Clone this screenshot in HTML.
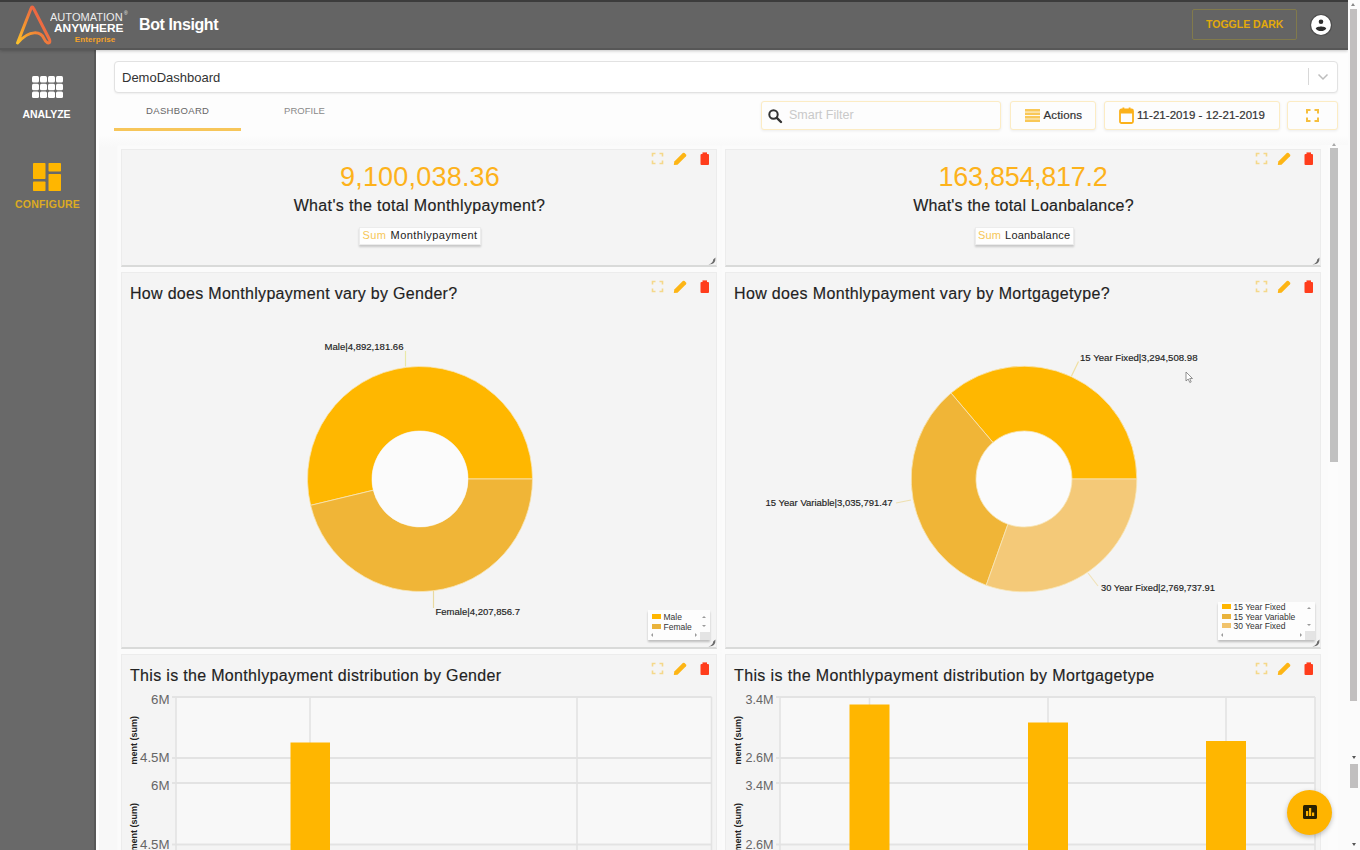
<!DOCTYPE html>
<html><head><meta charset="utf-8"><title>Bot Insight</title>
<style>
*{box-sizing:border-box;margin:0;padding:0}
html,body{width:1360px;height:850px;overflow:hidden;background:#fbfbfb;font-family:"Liberation Sans",sans-serif;}
.abs{position:absolute}
#hdr{position:absolute;left:0;top:0;width:1348px;height:50px;background:#646464;border-bottom:2.500px solid #575757;box-shadow:0 1px 3px rgba(0,0,0,.22)}
#side{position:absolute;left:0;top:49px;width:95.500px;height:801px;background:#696969;border-right:2.500px solid #595959}
#pscroll{position:absolute;left:1348px;top:0;width:12px;height:850px;background:#fbfbfb}
.t{position:absolute;white-space:nowrap;line-height:1}
.card{position:absolute;background:#f4f4f4;border:1px solid #ececec;border-bottom:2px solid #d9dad9;box-shadow:0 0 0 3.500px #fbfbfb}
.btn{position:absolute;background:#fdfdfd;border:1px solid #fcecc4;border-radius:3px;box-shadow:0 1px 3px rgba(0,0,0,.07)}
.kv{font-size:27px;color:#fdb21b;text-align:center;letter-spacing:.35px}
.kq{font-size:16px;color:#222;text-align:center;letter-spacing:.3px;-webkit-text-stroke:.15px #222}
.ct{font-size:16px;color:#222;letter-spacing:.3px;-webkit-text-stroke:.15px #222}
.tag{position:absolute;height:17.5px;background:#fefefe;border:1px solid #ececec;box-shadow:0 1.5px 2px rgba(0,0,0,.18);font-size:11px;color:#222;text-align:left;padding-left:3px;line-height:15.5px;white-space:nowrap;word-spacing:.6px;letter-spacing:.45px}
.tag span{color:#f6c757}
.lg{position:absolute;background:#fdfdfd;box-shadow:0 1.500px 2px rgba(0,0,0,.22)}
.lg i{position:absolute;width:8.500px;height:5px}
.lg b{position:absolute;font-weight:normal;font-size:8.500px;line-height:1;color:#333;white-space:nowrap}
.lg u{position:absolute;width:0;height:0;border:2px solid transparent;border-bottom:2.500px solid #9a9a9a;border-top:0;text-decoration:none}
.lg u.d{border-bottom:0;border-top:2.500px solid #9a9a9a}
.lg u.l{border:2px solid transparent;border-right:2.500px solid #9a9a9a;border-left:0}
.lg u.r{border:2px solid transparent;border-left:2.500px solid #9a9a9a;border-right:0}
.lg s{position:absolute;width:10px;height:8.500px;background:#e4e4e4}
.rh{position:absolute;width:6px;height:6px;border-right:2.500px solid #555;border-bottom:2.500px solid #555;border-bottom-right-radius:5px}
</style></head><body>
<div id="main" class="abs" style="left:95px;top:49px;width:1253px;height:801px;background:linear-gradient(#fdfdfd 0,#fdfdfd 86px,#f8f8f8 98px)">
<!-- coords relative to main: subtract 95,49 -->
<div class="abs" style="left:19px;top:12px;width:1224px;height:32px;background:#fff;border:1px solid #e2e2e2;border-radius:4px;box-shadow:0 1px 2px rgba(0,0,0,.06)"></div>
<div class="t" style="left:27px;top:22px;font-size:13px;color:#333">DemoDashboard</div>
<div class="abs" style="left:1213px;top:19px;width:1px;height:17px;background:#d8d8d8"></div>
<svg class="abs" style="left:1222px;top:24px" width="12" height="8" viewBox="0 0 12 8"><path d="M1.500 1.500 L6 6 L10.500 1.500" fill="none" stroke="#bdbdbd" stroke-width="1.500"/></svg>
<div class="t" style="left:51px;top:57px;font-size:9.5px;color:#666;letter-spacing:.35px">DASHBOARD</div>
<div class="t" style="left:189px;top:57px;font-size:9.5px;color:#8a8a8a;letter-spacing:.05px">PROFILE</div>
<div class="abs" style="left:19px;top:79px;width:127px;height:3px;background:#f7c65a"></div>
<div class="btn" style="left:666px;top:52px;width:240px;height:29px"></div>
<svg class="abs" style="left:672px;top:59px" width="16" height="16" viewBox="0 0 16 16"><circle cx="6.500" cy="6.500" r="4.200" fill="none" stroke="#333" stroke-width="2"/><path d="M9.800 9.800 L14 14" stroke="#333" stroke-width="2.400" stroke-linecap="round"/></svg>
<div class="t" style="left:694px;top:60px;font-size:12.5px;color:#c9c9c9">Smart Filter</div>
<div class="btn" style="left:915px;top:52px;width:86px;height:29px"></div>
<svg class="abs" style="left:930px;top:60px" width="15" height="13" viewBox="0 0 15 13"><g fill="#f9c857"><rect x="0" y="0" width="15" height="2.600"/><rect x="0" y="3.500" width="15" height="2.600"/><rect x="0" y="7" width="15" height="2.600"/><rect x="0" y="10.400" width="15" height="2.600"/></g></svg>
<div class="t" style="left:948.5px;top:61px;font-size:11.5px;color:#333;letter-spacing:.13px;-webkit-text-stroke:.2px #333">Actions</div>
<div class="btn" style="left:1009px;top:52px;width:176px;height:29px"></div>
<svg class="abs" style="left:1024px;top:58px" width="15" height="17" viewBox="0 0 15 17"><rect x="1" y="2.500" width="13" height="13.500" rx="1.500" fill="none" stroke="#fbb11a" stroke-width="1.800"/><rect x="1" y="2.500" width="13" height="4" fill="#fbb11a"/><rect x="3.500" y="0.500" width="1.800" height="3" fill="#fbb11a"/><rect x="9.700" y="0.500" width="1.800" height="3" fill="#fbb11a"/></svg>
<div class="t" style="left:1042px;top:61px;font-size:11.5px;color:#333;letter-spacing:.04px;-webkit-text-stroke:.2px #333">11-21-2019 - 12-21-2019</div>
<div class="btn" style="left:1192px;top:52px;width:51px;height:29px"></div>
<svg class="abs" style="left:1211px;top:60px" width="13" height="13" viewBox="0 0 13 13"><path d="M1 4.500V1H4.500 M8.500 1H12V4.500 M12 8.500V12H8.500 M4.500 12H1V8.500" fill="none" stroke="#f6bf3e" stroke-width="2"/></svg>

<div class="abs" style="left:0;top:0;width:4px;height:801px;background:#fff"></div>
<div class="abs" style="left:1226px;top:96px;width:27px;height:705px;background:#fbfbfb"></div>
<!-- cards -->
<div class="card" style="left:26px;top:100px;width:596px;height:118px"></div>
<div class="card" style="left:630px;top:100px;width:596px;height:118px"></div>
<div class="card" style="left:26px;top:223px;width:596px;height:377px"></div>
<div class="card" style="left:630px;top:223px;width:596px;height:377px"></div>
<div class="card" style="left:26px;top:605px;width:596px;height:230px"></div>
<div class="card" style="left:630px;top:605px;width:596px;height:230px"></div>
<svg class="abs" style="left:556px;top:103px" width="62" height="14" viewBox="0 0 62 14"><path d="M1.500 4.500V1.500H4.500 M8.500 1.500H11.500V4.500 M11.500 8.500V11.500H8.500 M4.500 11.500H1.500V8.500" fill="none" stroke="#f4d88a" stroke-width="1.600"/><path d="M22.800 13 L23.300 9.600 L31.800 1.100 Q32.700 .3 33.600 1.100 L35 2.500 Q35.800 3.400 35 4.300 L26.500 12.800 Z" fill="#fdb515"/><rect x="49.500" y="2" width="8.500" height="11" rx="1" fill="#ff3d1c"/><rect x="51.500" y=".4" width="4.500" height="2" fill="#ff3d1c"/></svg><svg class="abs" style="left:1160px;top:103px" width="62" height="14" viewBox="0 0 62 14"><path d="M1.500 4.500V1.500H4.500 M8.500 1.500H11.500V4.500 M11.500 8.500V11.500H8.500 M4.500 11.500H1.500V8.500" fill="none" stroke="#f4d88a" stroke-width="1.600"/><path d="M22.800 13 L23.300 9.600 L31.800 1.100 Q32.700 .3 33.600 1.100 L35 2.500 Q35.800 3.400 35 4.300 L26.500 12.800 Z" fill="#fdb515"/><rect x="49.500" y="2" width="8.500" height="11" rx="1" fill="#ff3d1c"/><rect x="51.500" y=".4" width="4.500" height="2" fill="#ff3d1c"/></svg><svg class="abs" style="left:556px;top:231px" width="62" height="14" viewBox="0 0 62 14"><path d="M1.500 4.500V1.500H4.500 M8.500 1.500H11.500V4.500 M11.500 8.500V11.500H8.500 M4.500 11.500H1.500V8.500" fill="none" stroke="#f4d88a" stroke-width="1.600"/><path d="M22.800 13 L23.300 9.600 L31.800 1.100 Q32.700 .3 33.600 1.100 L35 2.500 Q35.800 3.400 35 4.300 L26.500 12.800 Z" fill="#fdb515"/><rect x="49.500" y="2" width="8.500" height="11" rx="1" fill="#ff3d1c"/><rect x="51.500" y=".4" width="4.500" height="2" fill="#ff3d1c"/></svg><svg class="abs" style="left:1160px;top:231px" width="62" height="14" viewBox="0 0 62 14"><path d="M1.500 4.500V1.500H4.500 M8.500 1.500H11.500V4.500 M11.500 8.500V11.500H8.500 M4.500 11.500H1.500V8.500" fill="none" stroke="#f4d88a" stroke-width="1.600"/><path d="M22.800 13 L23.300 9.600 L31.800 1.100 Q32.700 .3 33.600 1.100 L35 2.500 Q35.800 3.400 35 4.300 L26.500 12.800 Z" fill="#fdb515"/><rect x="49.500" y="2" width="8.500" height="11" rx="1" fill="#ff3d1c"/><rect x="51.500" y=".4" width="4.500" height="2" fill="#ff3d1c"/></svg><svg class="abs" style="left:556px;top:613px" width="62" height="14" viewBox="0 0 62 14"><path d="M1.500 4.500V1.500H4.500 M8.500 1.500H11.500V4.500 M11.500 8.500V11.500H8.500 M4.500 11.500H1.500V8.500" fill="none" stroke="#f4d88a" stroke-width="1.600"/><path d="M22.800 13 L23.300 9.600 L31.800 1.100 Q32.700 .3 33.600 1.100 L35 2.500 Q35.800 3.400 35 4.300 L26.500 12.800 Z" fill="#fdb515"/><rect x="49.500" y="2" width="8.500" height="11" rx="1" fill="#ff3d1c"/><rect x="51.500" y=".4" width="4.500" height="2" fill="#ff3d1c"/></svg><svg class="abs" style="left:1160px;top:613px" width="62" height="14" viewBox="0 0 62 14"><path d="M1.500 4.500V1.500H4.500 M8.500 1.500H11.500V4.500 M11.500 8.500V11.500H8.500 M4.500 11.500H1.500V8.500" fill="none" stroke="#f4d88a" stroke-width="1.600"/><path d="M22.800 13 L23.300 9.600 L31.800 1.100 Q32.700 .3 33.600 1.100 L35 2.500 Q35.800 3.400 35 4.300 L26.500 12.800 Z" fill="#fdb515"/><rect x="49.500" y="2" width="8.500" height="11" rx="1" fill="#ff3d1c"/><rect x="51.500" y=".4" width="4.500" height="2" fill="#ff3d1c"/></svg>
<svg class="abs" style="left:0;top:0" width="1253" height="801" viewBox="95 49 1253 801" font-family="Liberation Sans, sans-serif">
<path d="M532.50 479.00A112.5 112.5 0 1 0 310.62 505.33L373.33 490.23A48 48 0 1 1 468.00 479.00Z" fill="#ffb700" stroke="#f8e6b8" stroke-width=".8"/>
<path d="M310.62 505.33A112.5 112.5 0 0 0 532.50 479.00L468.00 479.00A48 48 0 0 1 373.33 490.23Z" fill="#f0b537" stroke="#f8e6b8" stroke-width=".8"/>
<circle cx="420" cy="479" r="48" fill="#fbfbfb"/><circle cx="1024" cy="479" r="48" fill="#fbfbfb"/><path d="M405.500 351V366.500" stroke="#e9e8a8" stroke-width="1.200" fill="none"/>
<path d="M433.500 591V608" stroke="#e9d9a0" stroke-width="1.200" fill="none"/>
<text x="324.500" y="349.700" font-size="8.500" fill="#222" stroke="#222" stroke-width=".15" textLength="79" lengthAdjust="spacingAndGlyphs">Male|4,892,181.66</text>
<text x="435.500" y="615" font-size="8.500" fill="#222" stroke="#222" stroke-width=".15" textLength="84.500" lengthAdjust="spacingAndGlyphs">Female|4,207,856.7</text>
<path d="M1136.80 479.00A112.8 112.8 0 0 0 950.99 393.01L992.93 442.41A48 48 0 0 1 1072.00 479.00Z" fill="#ffb700" stroke="#f8e6b8" stroke-width=".8"/>
<path d="M950.99 393.01A112.8 112.8 0 0 0 986.21 585.28L1007.92 524.23A48 48 0 0 1 992.93 442.41Z" fill="#f0b537" stroke="#f8e6b8" stroke-width=".8"/>
<path d="M986.21 585.28A112.8 112.8 0 0 0 1136.80 479.00L1072.00 479.00A48 48 0 0 1 1007.92 524.23Z" fill="#f4c978" stroke="#f8e6b8" stroke-width=".8"/>
<path d="M1071.500 376L1078.500 361.500" stroke="#f0dfa0" stroke-width="1.200" fill="none"/>
<path d="M896 503L911 500" stroke="#eee0b0" stroke-width="1.200" fill="none"/>
<path d="M1088 573L1098 586" stroke="#f0e2b8" stroke-width="1.200" fill="none"/>
<text x="1080" y="360.500" font-size="8.500" fill="#222" stroke="#222" stroke-width=".15" textLength="117.500" lengthAdjust="spacingAndGlyphs">15 Year Fixed|3,294,508.98</text>
<text x="765.500" y="506" font-size="8.500" fill="#222" stroke="#222" stroke-width=".15" textLength="127" lengthAdjust="spacingAndGlyphs">15 Year Variable|3,035,791.47</text>
<text x="1101" y="591" font-size="8.500" fill="#222" stroke="#222" stroke-width=".15" textLength="114" lengthAdjust="spacingAndGlyphs">30 Year Fixed|2,769,737.91</text>
<rect x="176" y="697" width="535.5" height="61" fill="#f8f8f8"/>
<rect x="176" y="783" width="535.5" height="61.5" fill="#f8f8f8"/>
<rect x="176" y="758" width="535.5" height="25" fill="#f7f7f7"/>
<path d="M172 697H711.5" stroke="#e3e3e3" stroke-width="2"/>
<path d="M172 758H711.5" stroke="#e3e3e3" stroke-width="2"/>
<path d="M172 783H711.5" stroke="#e3e3e3" stroke-width="2"/>
<path d="M172 844.5H711.5" stroke="#e3e3e3" stroke-width="2"/>
<path d="M310 697V850" stroke="#e3e3e3" stroke-width="1.600"/>
<path d="M577 697V850" stroke="#e3e3e3" stroke-width="1.600"/>
<path d="M176 697V850" stroke="#e3e3e3" stroke-width="1.600"/>
<path d="M711.5 697V850" stroke="#e3e3e3" stroke-width="1.600"/>
<text x="169.5" y="704.2" font-size="12" fill="#666" text-anchor="end" textLength="18.5" lengthAdjust="spacingAndGlyphs">6M</text>
<text x="169.5" y="762.2" font-size="12" fill="#666" text-anchor="end" textLength="29.5" lengthAdjust="spacingAndGlyphs">4.5M</text>
<text x="169.5" y="790.2" font-size="12" fill="#666" text-anchor="end" textLength="18.5" lengthAdjust="spacingAndGlyphs">6M</text>
<text x="169.5" y="848.7" font-size="12" fill="#666" text-anchor="end" textLength="29.5" lengthAdjust="spacingAndGlyphs">4.5M</text>
<text transform="translate(136.5 764.5) rotate(-90)" font-size="9" font-weight="bold" fill="#222">ment (sum)</text>
<text transform="translate(136.5 851.5) rotate(-90)" font-size="9" font-weight="bold" fill="#222">ment (sum)</text>
<rect x="290.500" y="742.500" width="39.500" height="110" fill="#ffb600"/>
<rect x="780" y="697" width="535" height="61" fill="#f8f8f8"/>
<rect x="780" y="783" width="535" height="61.5" fill="#f8f8f8"/>
<rect x="780" y="758" width="535" height="25" fill="#f7f7f7"/>
<path d="M776 697H1315" stroke="#e3e3e3" stroke-width="2"/>
<path d="M776 758H1315" stroke="#e3e3e3" stroke-width="2"/>
<path d="M776 783H1315" stroke="#e3e3e3" stroke-width="2"/>
<path d="M776 844.5H1315" stroke="#e3e3e3" stroke-width="2"/>
<path d="M869.5 697V850" stroke="#e3e3e3" stroke-width="1.600"/>
<path d="M1048 697V850" stroke="#e3e3e3" stroke-width="1.600"/>
<path d="M1226 697V850" stroke="#e3e3e3" stroke-width="1.600"/>
<path d="M780 697V850" stroke="#e3e3e3" stroke-width="1.600"/>
<path d="M1315 697V850" stroke="#e3e3e3" stroke-width="1.600"/>
<text x="773.5" y="704.2" font-size="12" fill="#666" text-anchor="end" textLength="28" lengthAdjust="spacingAndGlyphs">3.4M</text>
<text x="773.5" y="762.2" font-size="12" fill="#666" text-anchor="end" textLength="28" lengthAdjust="spacingAndGlyphs">2.6M</text>
<text x="773.5" y="790.2" font-size="12" fill="#666" text-anchor="end" textLength="28" lengthAdjust="spacingAndGlyphs">3.4M</text>
<text x="773.5" y="848.7" font-size="12" fill="#666" text-anchor="end" textLength="28" lengthAdjust="spacingAndGlyphs">2.6M</text>
<text transform="translate(740.5 764.5) rotate(-90)" font-size="9" font-weight="bold" fill="#222">ment (sum)</text>
<text transform="translate(740.5 851.5) rotate(-90)" font-size="9" font-weight="bold" fill="#222">ment (sum)</text>
<rect x="849.5" y="704.5" width="40" height="150" fill="#ffb600"/>
<rect x="1028" y="722.5" width="40" height="150" fill="#ffb600"/>
<rect x="1206" y="741" width="40" height="150" fill="#ffb600"/>
</svg>
<div class="t kv" style="left:27px;width:596px;top:115px;letter-spacing:.2px">9,100,038.36</div>
<div class="t kq" style="left:26.500px;width:596px;top:149px;letter-spacing:.35px">What's the total Monthlypayment?</div>
<div class="tag" style="left:263.500px;top:178px;width:122.500px"><span>Sum</span> Monthlypayment</div>
<div class="t kv" style="left:630px;width:596px;top:115px;letter-spacing:-.3px">163,854,817.2</div>
<div class="t kq" style="left:630.500px;width:596px;top:149px;letter-spacing:.2px">What's the total Loanbalance?</div>
<div class="tag" style="left:879.500px;top:178px;width:99px;letter-spacing:.2px;padding-left:2.500px"><span>Sum</span> Loanbalance</div>
<div class="t ct" style="left:35px;top:236.500px">How does Monthlypayment vary by Gender?</div>
<div class="t ct" style="left:639px;top:236.500px;letter-spacing:.35px">How does Monthlypayment vary by Mortgagetype?</div>
<div class="t ct" style="left:35px;top:618.500px;letter-spacing:.32px">This is the Monthlypayment distribution by Gender</div>
<div class="t ct" style="left:639px;top:618.500px;letter-spacing:.37px">This is the Monthlypayment distribution by Mortgagetype</div>
<div class="lg" style="left:553px;top:561px;width:61.5px;height:30px"><i style="left:4px;top:4.0px;background:#ffb600"></i><b style="left:15.500px;top:3.0px">Male</b><i style="left:4px;top:13.5px;background:#e9b33c"></i><b style="left:15.500px;top:12.5px">Female</b><u style="right:3.500px;top:5.500px"></u><u class="d" style="right:3.500px;top:15px"></u><u class="l" style="left:3px;bottom:3px"></u><u class="r" style="right:13px;bottom:3px"></u><s style="right:0;bottom:0"></s></div>
<div class="lg" style="left:1123px;top:552.5px;width:96.5px;height:38.0px"><i style="left:4px;top:2.8px;background:#ffb600"></i><b style="left:15.500px;top:1.8px">15 Year Fixed</b><i style="left:4px;top:12.3px;background:#e9b33c"></i><b style="left:15.500px;top:11.3px">15 Year Variable</b><i style="left:4px;top:21.8px;background:#f1c36c"></i><b style="left:15.500px;top:20.8px">30 Year Fixed</b><u style="right:3.500px;top:5px"></u><u class="d" style="right:3.500px;top:22.0px"></u><u class="l" style="left:3px;bottom:3px"></u><u class="r" style="right:13px;bottom:3px"></u><s style="right:0;bottom:0"></s></div>
<svg class="abs" style="left:613.0px;top:207.5px" width="8" height="8" viewBox="0 0 8 8"><path d="M7.500 .5Q7.800 7.800 .5 7.500Q5 6 5.200 2.500Z" fill="#6d6d6d"/></svg>
<svg class="abs" style="left:1217.0px;top:207.5px" width="8" height="8" viewBox="0 0 8 8"><path d="M7.500 .5Q7.800 7.800 .5 7.500Q5 6 5.200 2.500Z" fill="#6d6d6d"/></svg>
<svg class="abs" style="left:613.0px;top:589.5px" width="8" height="8" viewBox="0 0 8 8"><path d="M7.500 .5Q7.800 7.800 .5 7.500Q5 6 5.200 2.500Z" fill="#6d6d6d"/></svg>
<svg class="abs" style="left:1217.0px;top:589.5px" width="8" height="8" viewBox="0 0 8 8"><path d="M7.500 .5Q7.800 7.800 .5 7.500Q5 6 5.200 2.500Z" fill="#6d6d6d"/></svg>
<div class="abs" style="left:1233px;top:96px;width:10px;height:705px;background:#fcfcfc"></div>
<div class="abs" style="left:1235px;top:98.500px;width:8px;height:314.500px;background:#c1c1c1"></div>
<div class="abs" style="left:1237px;top:94px;width:0;height:0;border:2.500px solid transparent;border-bottom:3px solid #a8a8a8;border-top:0"></div>
<div class="abs" style="left:1192px;top:740.500px;width:45px;height:45px;border-radius:50%;background:#ffb400;box-shadow:0 2px 5px rgba(0,0,0,.25)"></div>
<svg class="abs" style="left:1207.500px;top:756px" width="14" height="14" viewBox="0 0 14 14"><rect width="14" height="14" rx="1.500" fill="#2b2200"/><rect x="3" y="6" width="2.200" height="5" fill="#ffb400"/><rect x="6" y="3" width="2.200" height="8" fill="#ffb400"/><rect x="9" y="7.500" width="2.200" height="3.500" fill="#ffb400"/></svg>
<svg class="abs" style="left:1090px;top:322px" width="9" height="13" viewBox="0 0 9 13"><path d="M1 1V10L3.200 8L4.800 11.500L6.200 10.900L4.700 7.500H7.500Z" fill="#fff" stroke="#777" stroke-width=".8"/></svg>
</div>
<div id="side">
<svg class="abs" style="left:32px;top:26.500px" width="31" height="22" viewBox="0 0 31 22"><g fill="#fff">
<rect x="0" y="0" width="7" height="6.500" rx="1.500"/><rect x="8" y="0" width="7" height="6.500" rx="1.500"/><rect x="16" y="0" width="7" height="6.500" rx="1.500"/><rect x="24" y="0" width="7" height="6.500" rx="1.500"/>
<rect x="0" y="7.700" width="7" height="6.500" rx="1.500"/><rect x="8" y="7.700" width="7" height="6.500" rx="1.500"/><rect x="16" y="7.700" width="7" height="6.500" rx="1.500"/><rect x="24" y="7.700" width="7" height="6.500" rx="1.500"/>
<rect x="0" y="15.400" width="7" height="6.500" rx="1.500"/><rect x="8" y="15.400" width="7" height="6.500" rx="1.500"/><rect x="16" y="15.400" width="7" height="6.500" rx="1.500"/><rect x="24" y="15.400" width="7" height="6.500" rx="1.500"/>
</g></svg>
<div class="t" style="left:0;width:95px;text-align:center;top:60px;font-size:10.500px;font-weight:bold;color:#fff;letter-spacing:-.1px;margin-left:-1px">ANALYZE</div>
<svg class="abs" style="left:32.500px;top:114px" width="28" height="28" viewBox="0 0 28 28"><g fill="#ffb600">
<rect x="0" y="0" width="12.500" height="16" rx=".8"/><rect x="15.500" y="0" width="12.500" height="8.500" rx=".8"/><rect x="0" y="18.500" width="12.500" height="9.500" rx=".8"/><rect x="15.500" y="11" width="12.500" height="17" rx=".8"/></g></svg>
<div class="t" style="left:0;width:95px;text-align:center;top:150px;font-size:10.500px;font-weight:bold;color:#dcab22;letter-spacing:.25px">CONFIGURE</div>
</div>
<div id="hdr">
<div class="abs" style="left:0;top:0;width:1348px;height:1.500px;background:#3c3c3c"></div>
<svg class="abs" style="left:0;top:0" width="60" height="49" viewBox="0 0 60 49">
<defs><linearGradient id="lg" gradientUnits="userSpaceOnUse" x1="16" y1="44" x2="52" y2="20"><stop offset="0" stop-color="#fdc72c"/><stop offset=".35" stop-color="#f59a2d"/><stop offset=".7" stop-color="#ee7040"/><stop offset="1" stop-color="#ef5346"/></linearGradient></defs>
<path d="M17.500 43 L31 8.500 Q32.200 5.600 33.600 8.500 L49.500 39.500 Q51 43.500 47.500 42.800 Q45.500 42 44 38.500 C41 31.500 30 29 17.500 43 Z" fill="none" stroke="url(#lg)" stroke-width="3" stroke-linejoin="round" stroke-linecap="round"/>
</svg>
<div class="t" style="left:49.500px;top:12.700px;font-size:10px;color:#ececec;transform:scaleX(1.105);transform-origin:0 0">AUTOMATION</div>
<div class="t" style="left:124px;top:10.500px;font-size:5px;color:#ececec">®</div>
<div class="t" style="left:53.800px;top:23px;font-size:10.500px;font-weight:bold;color:#fff;transform:scaleX(1.135);transform-origin:0 0">ANYWHERE</div>
<div class="t" style="left:74.800px;top:35.500px;font-size:8px;font-weight:bold;color:#f5a228;letter-spacing:.1px">Enterprise</div>
<div class="t" style="left:139px;top:16.500px;font-size:16px;font-weight:bold;color:#fff;letter-spacing:-.4px">Bot Insight</div>
<div class="abs" style="left:1192px;top:9px;width:105px;height:31px;border:1.500px solid #817a4c;border-radius:2px"></div>
<div class="t" style="left:1206px;top:19px;font-size:10.500px;font-weight:bold;color:#e3aa0b">TOGGLE DARK</div>
<svg class="abs" style="left:1309px;top:13px" width="24" height="24" viewBox="0 0 24 24"><circle cx="12" cy="12" r="10.500" fill="#fff" stroke="#4c4c4c" stroke-width="1.200"/><circle cx="12" cy="8.800" r="2.300" fill="#2e2e2e"/><path d="M6.800 15.800c0-1.600 3.400-2.300 5.200-2.300s5.200.7 5.200 2.300c-1.200 1.500-3 2.300-5.200 2.300s-4-.8-5.200-2.300z" fill="#2e2e2e"/></svg>
</div>
<div id="pscroll">
<div class="abs" style="left:2px;top:9px;width:7px;height:692px;background:#c1bfbf"></div>
<div class="abs" style="left:1.500px;top:764px;width:8px;height:24px;background:#c1bfbf"></div>
<div class="abs" style="left:3px;top:3px;width:0;height:0;border:2.500px solid transparent;border-bottom:3px solid #888;border-top:0"></div>
<div class="abs" style="left:3.500px;top:756px;width:0;height:0;border:2.500px solid transparent;border-top:3px solid #555;border-bottom:0"></div>
<div class="abs" style="left:3.500px;top:843px;width:0;height:0;border:2.500px solid transparent;border-top:3px solid #555;border-bottom:0"></div>
</div>
</body></html>
